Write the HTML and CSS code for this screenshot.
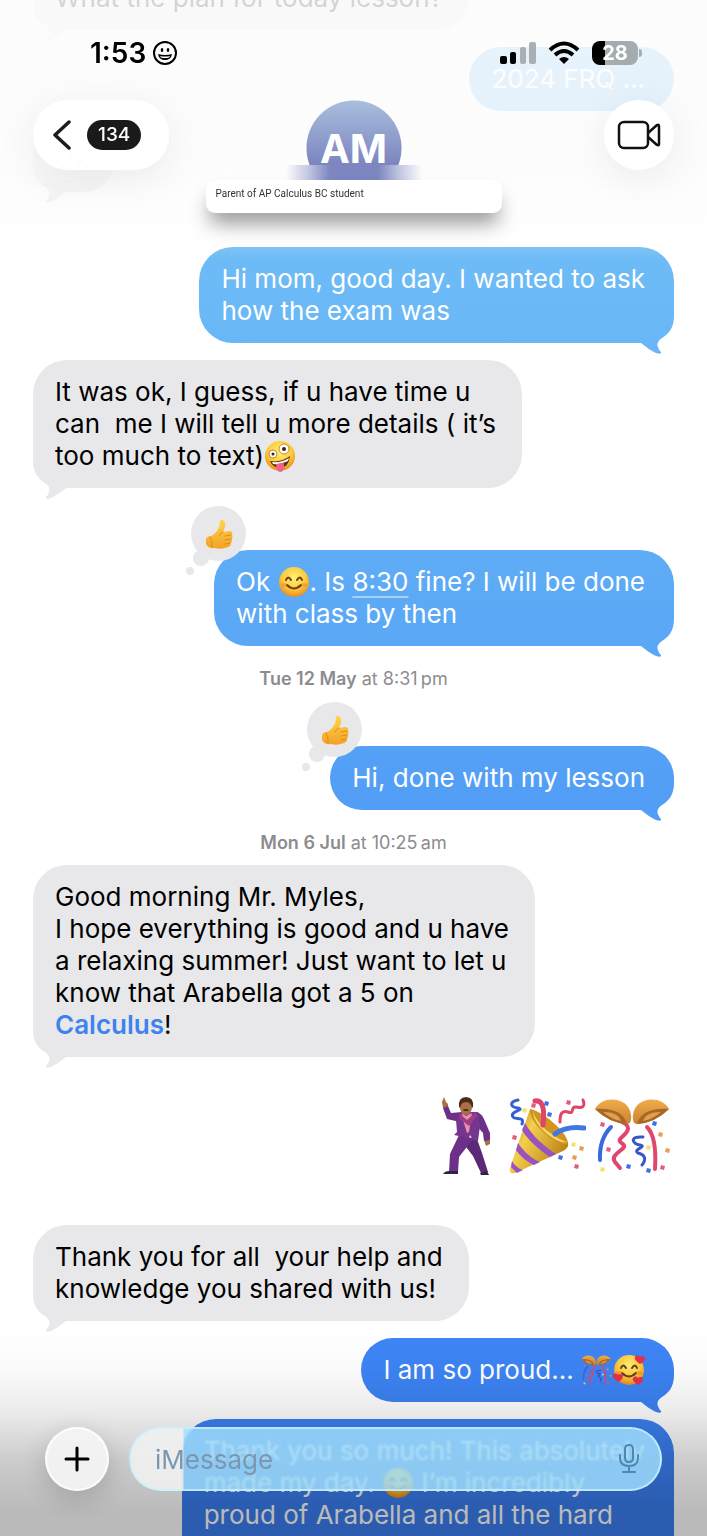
FILE: index.html
```html
<!DOCTYPE html>
<html lang="en">

<head>
    <meta charset="UTF-8">
    <meta name="viewport" content="width=device-width, initial-scale=1.0">
    <title>Messages</title>
    <link rel="stylesheet" href="styles.css">
</head>

<body>
    <!-- shared drawings -->
    <svg class="sprite" aria-hidden="true">
        <defs>
            <radialGradient id="face" cx="50%" cy="35%" r="65%">
                <stop offset="0" stop-color="#fff07a" />
                <stop offset="0.6" stop-color="#fccb3c" />
                <stop offset="1" stop-color="#ec8a1c" />
            </radialGradient>
            <linearGradient id="cone" x1="0" y1="0" x2="1" y2="0.6">
                <stop offset="0" stop-color="#b07a14" />
                <stop offset="0.4" stop-color="#f4cf4c" />
                <stop offset="1" stop-color="#b98116" />
            </linearGradient>
            <linearGradient id="shell" x1="0" y1="0" x2="0" y2="1">
                <stop offset="0" stop-color="#f0ac4a" />
                <stop offset="1" stop-color="#c98330" />
            </linearGradient>
            <linearGradient id="thumb" x1="0" y1="0" x2="0" y2="1">
                <stop offset="0" stop-color="#ffd54a" />
                <stop offset="1" stop-color="#f3a127" />
            </linearGradient>
        </defs>
        <symbol id="thumbs-up" viewBox="0 0 28 30">
            <path fill="url(#thumb)" d="M1 20Q2 17 6 17Q9 16 12 12Q15 8 15 3Q15 0 18 1Q21 3 20 8L18 13L24 12Q28 12 27 15Q28 18 27 20Q27 23 26 24Q26 27 23 28Q16 31 10 29Q3 30 1 25Z" />
            <path fill="none" stroke="#dd8c1c" stroke-width="1" stroke-linecap="round" d="M18 13q-3 1-4 4M20 17l6-1M20 21l6-1M20 25l5-1M5 18q3 5 2 10" />
        </symbol>
        <symbol id="popper-ball" viewBox="0 0 80 80">
            <path fill="none" stroke="#3a6ae0" stroke-width="4" stroke-linecap="round" d="M17 31Q5 43 6 64" />
            <path fill="none" stroke="#e0476f" stroke-width="4" stroke-linecap="round" d="M28 26c9 4 7 9 0 15-7 6 4 6 2 10-2 4-14 8-9 15l5 6M53 31q10 10 8 42" />
            <path fill="none" stroke="#3558c4" stroke-width="3" stroke-linecap="round" d="M49 41c-14-1-11 7-3 8 8 2-8 4-2 8 8 2 8 7 4 12" />
            <path fill="url(#shell)" d="M1 13C8-1 35 0 37 19Q38 28 33 28Q15 27 1 13z" />
            <path fill="#a8682a" d="M1 13Q28 11 33 28Q15 27 1 13z" />
            <path fill="#e0a04c" d="M9 16Q24 16 27 25Q17 23 9 16z" />
            <path fill="url(#shell)" d="M75 13C68-1 41 0 39 19Q38 28 43 28Q61 27 75 13z" />
            <path fill="#a8682a" d="M75 13Q48 11 43 28Q61 27 75 13z" />
            <path fill="#e0a04c" d="M67 16Q52 16 49 25Q59 23 67 16z" />
            <path fill="#e25c7b" d="M7 26l4 1-1 4-4-1zM13 51l4 1-1 4-4-1zM67 69l4 1-1 4-4-1z" />
            <path fill="#3d6fe6" d="M59 25l4 1-1 4-4-1zM33 68l4 1-1 4-4-1zM53 72l4 1-1 4-4-1z" />
            <path fill="#ec9d4f" d="M65 36l4 1-1 4-4-1zM72 52l4 1-1 4-4-1z" />
            <path fill="#f4e370" d="M53 49l4 1-1 4-4-1zM7 71l4 1-1 4-4-1z" />
        </symbol>
        <symbol id="smile" viewBox="0 0 32 32">
            <circle cx="16" cy="16" r="15" fill="url(#face)" />
            <path fill="none" stroke="#6b3f10" stroke-width="2" stroke-linecap="round" d="M8 14q2-5 5 0M19 14q3-5 5 0M9 19q7 7 14 0" />
            <ellipse cx="6" cy="19" rx="3" ry="2" fill="#f3713a" opacity=".4" />
            <ellipse cx="26" cy="19" rx="3" ry="2" fill="#f3713a" opacity=".4" />
        </symbol>
    </svg>

    <main class="thread">
        <p class="bubble received">What the plan for today lesson?</p>
        <p class="bubble sent file">2024 FRQ ...</p>
        <p class="bubble received">Ok</p>
        <p class="bubble sent after-file">Hi mom, good day. I wanted to ask<br>how the exam was</p>
        <p class="bubble received">It was ok, I guess, if u have time u<br>can&nbsp; me I will tell u more details ( it’s<br>too much to text)<svg class="emoji" viewBox="0 0 32 32" role="img" aria-label="Zany face">
                <circle cx="16" cy="16" r="15" fill="url(#face)" />
                <circle cx="9" cy="14" r="4" fill="#fff" stroke="#c98a20" />
                <circle cx="9" cy="14" r="1.5" fill="#3b2410" />
                <circle cx="20" cy="9" r="5" fill="#fff" stroke="#c98a20" />
                <circle cx="20" cy="9" r="2" fill="#3b2410" />
                <path fill="#5d2e0c" d="M6 21q11 2 20-5-1 11-10 12-7 0-10-7z" />
                <path fill="#fff" d="M8 22q10 1 17-4l-1 3q-7 4-15 3z" />
                <path fill="#f2608c" d="M12 24q5 0 8-2l0 6q-1 4-4 4-4-1-4-8z" />
            </svg></p>
        <div class="bubble sent reacted">
            <span class="reaction"><svg class="thumb" role="img" aria-label="Liked"><use href="#thumbs-up" /></svg></span>
            Ok <svg class="emoji" role="img" aria-label="Smiling face"><use href="#smile" /></svg>. Is <a class="time-link" href="#">8:30</a> fine? I will be done<br>with class by then
        </div>
        <p class="stamp"><b>Tue 12 May</b> at 8:31&#8239;pm</p>
        <div class="bubble sent reacted">
            <span class="reaction"><svg class="thumb" role="img" aria-label="Liked"><use href="#thumbs-up" /></svg></span>
            Hi, done with my lesson
        </div>
        <p class="stamp"><b>Mon 6 Jul</b> at 10:25&#8239;am</p>
        <p class="bubble received">Good morning Mr. Myles,<br>I hope everything is good and u have<br>a relaxing summer! Just want to let u<br>know that Arabella got a 5 on<br><a class="topic" href="#">Calculus</a>!</p>
        <div class="big-emoji">
            <svg viewBox="0 0 56 80" role="img" aria-label="Man dancing">
                <path fill="#a96f45" d="M0 6L2 1L4 6L6 8L6 12L1 12ZM42 44L48 43L48 48L44 50Z" />
                <path fill="#5c2878" d="M20 40L35 43L40 57L46 76L39 77L31 60L21 47Z" />
                <path fill="#6c3088" d="M1 12L6 10L9 17L20 16L18 26L5 23ZM35 16Q40 18 42 23L48 37L48 44L42 45L41 37L34 29ZM17 39L31 43L17 61L16 76L7 76L8 58Z" />
                <path fill="#74368f" d="M14 24L19 16L36 16L38 30L36 45L31 44L28 39L27 42L12 39L15 36Z" />
                <path fill="#ec8fae" d="M20 17L24 20L30 17L27 36L25 37L21 24Z" />
                <path fill="#a13d83" d="M17 17L25 24L34 16L35 20L27 30L18 23Z" />
                <ellipse cx="24" cy="11" rx="6" ry="8" fill="#a96f45" />
                <path fill="#4d2c18" d="M17 11Q16 1 24 1T31 11L30 12Q29 6 24 6T18 12ZM21 14q3-2 6 0l-1 1h-4z" />
                <path fill="#2b2541" d="M7 75h9v3H1q2-3 6-3zM38 77l7-2 2 4h-8z" />
            </svg>
            <svg viewBox="0 0 80 80" role="img" aria-label="Party popper">
                <path fill="none" stroke="#365fd4" stroke-width="3" stroke-linecap="round" d="M12 4c-9 2-8 7 0 8 8 2-9 3-5 9 2 3 12-1 9 7" />
                <path fill="url(#cone)" d="M24 13c10 3 32 24 38 34 1 4-2 6-5 8L9 77c-4 1-6-1-5-5z" />
                <path fill="#d2941f" d="M24 13c10 1 37 22 38 34-7 7-40-19-38-34z" />
                <path fill="#f5da68" d="M27 15c3 13 21 27 34 31-7 3-34-14-34-31z" />
                <path fill="#9a52c3" d="M19 27c7 13 20 24 31 31l-6 3C33 54 21 43 16 34zM12 47c6 9 14 16 22 19l-6 3c-7-3-14-9-18-15zM6 65c3 5 7 8 11 9l-6 3-6-6z" />
                <path fill="none" stroke="#df4569" stroke-width="5" stroke-linecap="round" d="M29 5q11-2 8 24" />
                <path fill="none" stroke="#df4569" stroke-width="3" stroke-linecap="round" d="M77 4c3 8-2 8-7 7-6-1-1 8-8 5-7-2-8 3-8 10" />
                <path fill="none" stroke="#3e78e0" stroke-width="5" stroke-linecap="round" d="M49 38q11-8 29-6" />
                <path fill="#e25c7b" d="M26 7l4 1-1 4-4-1zM61 4l4 1-1 4-4-1zM7 39l4 1-1 4-4-1zM69 68l4 1-1 4-4-1z" />
                <path fill="#3d6fe6" d="M39 5l4 1-1 4-4-1zM42 16l4 1-1 4-4-1zM53 59l4 1-1 4-4-1z" />
                <path fill="#f4e370" d="M17 12l4 1-1 4-4-1zM66 46l4 1-1 4-4-1z" />
                <path fill="#ec9d4f" d="M67 59l4 1-1 4-4-1zM74 50l4 1-1 4-4-1z" />
            </svg>
            <svg viewBox="0 0 80 80" role="img" aria-label="Confetti ball"><use href="#popper-ball" /></svg>
        </div>
        <p class="bubble received">Thank you for all&nbsp; your help and<br>knowledge you shared with us!</p>
        <p class="bubble sent">I am so proud... <svg class="emoji" role="img" aria-label="Confetti ball"><use href="#popper-ball" /></svg><svg class="emoji" viewBox="0 0 32 32" role="img" aria-label="Smiling face with hearts">
                <use href="#smile" />
                <path id="heart" fill="#e8304a" d="M27 10c-4-3-6-5-5-7 1-2 4-2 5 0 2-2 5-1 5 1 0 3-2 4-5 6z" />
                <use href="#heart" x="-22" y="18" />
                <use href="#heart" x="-2" y="21" />
            </svg></p>
        <p class="bubble sent latest">Thank you so much! This absolutely<br>made my day. <svg class="emoji" role="img" aria-label="Smiling face"><use href="#smile" /></svg> I’m incredibly<br>proud of Arabella and all the hard</p>
    </main>

    <header class="top">
        <div class="status">
            <div class="clock">
                <span>1:53</span>
                <svg width="24" height="24" viewBox="0 0 24 24" aria-hidden="true">
                    <circle cx="12" cy="12" r="11" fill="none" stroke="#000" stroke-width="2" />
                    <ellipse cx="9" cy="9" rx="1.3" ry="2" />
                    <ellipse cx="15" cy="9" rx="1.3" ry="2" />
                    <path d="M5 13q7 2 14 0-1 6-7 6t-7-6z" />
                    <path fill="#fff" d="M7 15q5 1 10 0l-1 1.500q-4 1-8 0z" />
                </svg>
            </div>
            <div class="signals">
                <svg width="36" height="24" viewBox="0 0 36 24" aria-hidden="true">
                    <rect x="0" y="15" width="7" height="8" rx="2" />
                    <rect x="10" y="11" width="6" height="12" rx="2" />
                    <rect x="20" y="6" width="6" height="17" rx="2" fill="#a9afb3" />
                    <rect x="29" y="1" width="7" height="22" rx="2" fill="#a9afb3" />
                </svg>
                <svg width="32" height="24" viewBox="0 0 32 24" aria-hidden="true">
                    <path fill="none" stroke="#000" stroke-width="4" d="M2 9q14-13 28 0M7 14q9-8 18 0" />
                    <path d="M11 18q5-4 10 0l-5 5z" />
                </svg>
                <div class="battery"><span>28</span></div>
            </div>
        </div>
        <nav class="nav">
            <button class="pill back" type="button" aria-label="Back">
                <svg width="18" height="30" viewBox="0 0 18 30" aria-hidden="true">
                    <path fill="none" stroke="#1c1c1c" stroke-width="3.500" stroke-linecap="round" stroke-linejoin="round" d="M16 2L2 15l14 13" />
                </svg>
                <span class="count">134</span>
            </button>
            <div class="contact">
                <div class="avatar">AM</div>
                <div class="name">Parent of AP Calculus BC student</div>
            </div>
            <button class="pill video" type="button" aria-label="Video call">
                <svg width="44" height="30" viewBox="0 0 44 30" aria-hidden="true">
                    <rect x="2" y="2" width="29" height="26" rx="5" fill="none" stroke="#111" stroke-width="2.500" />
                    <path fill="none" stroke="#111" stroke-width="2.500" stroke-linejoin="round" d="M31 13l9-8q2-1 2 1v18q0 2-2 1l-9-8" />
                </svg>
            </button>
        </nav>
    </header>

    <footer class="composer">
        <button class="glass add" type="button" aria-label="Add">
            <svg width="26" height="26" viewBox="0 0 26 26" aria-hidden="true">
                <path stroke="#000" stroke-width="3" stroke-linecap="round" d="M13 2v22M2 13h22" />
            </svg>
        </button>
        <div class="glass field">
            <input type="text" aria-label="Message" placeholder="iMessage">
            <button class="mic" type="button" aria-label="Dictate">
                <svg width="22" height="30" viewBox="0 0 22 30" aria-hidden="true">
                    <path fill="none" stroke="#4e86b4" stroke-width="2" stroke-linecap="round" d="M11 1q4 0 4 4v9q0 4-4 4t-4-4V5q0-4 4-4zM2 11v3q0 8 9 8t9-8v-3M11 22v6M5 28h12" />
                </svg>
            </button>
        </div>
    </footer>
</body>

</html>
```
FILE: styles.css
```css
* {
    box-sizing: border-box;
}

body {
    font-family: Inter, "Liberation Sans", sans-serif;
    margin: 0;
    height: 100vh;
    overflow: hidden;
    background-color: #fff;
    color: #000;
}

button {
    border: none;
    padding: 0;
    font: inherit;
    cursor: pointer;
}

.sprite {
    position: absolute;
    width: 0;
    height: 0;
}

/* conversation */
.thread {
    display: flex;
    flex-direction: column;
    align-items: flex-start;
    gap: 17px;
    height: 100vh;
    overflow: hidden;
    padding: 0 33px;
    font-size: 26px;
    line-height: 32px;
}

.bubble {
    position: relative;
    isolation: isolate;
    flex: none;
    margin: 0;
    padding: 16px 29px 16px 22px;
    border-radius: 34px;
    white-space: nowrap;
}

.bubble:first-child {
    margin-top: -34px;
}

/* tail */
.bubble::after {
    content: "";
    position: absolute;
    z-index: -1;
    bottom: -12px;
    width: 34px;
    height: 46px;
    background: inherit;
}

.received {
    padding: 16px 26px 16px 22px;
    background-color: #e8e8ea;
}

.received::after {
    left: 0;
    clip-path: path("M0 0 V7 C0 20 6 25 12 29 C17 32 17 36 16 38 C15 42 12 43 13 44 C14 47 25 41 33 34 L34 34 V0 Z");
}

.sent {
    align-self: flex-end;
    color: #fff;
    background: linear-gradient(#7cc6f5, #6bb9f6 300px, #5caaf6 600px, #539ff6 780px, #3d84f5 1370px, #3a7df0) fixed;
}

.sent::after {
    right: 0;
    clip-path: path("M34 0 V7 C34 20 28 25 22 29 C17 32 17 36 18 38 C19 42 22 43 21 44 C20 47 9 41 1 34 L0 34 V0 Z");
}

.file::after {
    display: none;
}

.after-file {
    margin-top: 38px;
}

.reacted {
    margin-top: 45px;
}

/* runs on below the bottom bar */
.latest {
    padding-bottom: 60px;
}

.emoji {
    width: 32px;
    height: 32px;
    margin-top: -4px;
    vertical-align: -7px;
}

.time-link {
    color: inherit;
    text-decoration: underline;
    text-decoration-thickness: 2px;
    text-decoration-color: #a8d2fb;
    text-underline-offset: 5px;
}

.topic {
    color: #3d83ef;
    font-weight: 600;
    text-decoration: none;
}

.reaction {
    position: absolute;
    left: -23px;
    top: -44px;
    width: 55px;
    height: 55px;
    display: flex;
    align-items: center;
    justify-content: center;
    border-radius: 50%;
    background-color: #e8e8ea;
}

.reaction::before,
.reaction::after {
    content: "";
    position: absolute;
    border-radius: 50%;
    background-color: #e8e8ea;
}

.reaction::before {
    left: 2px;
    bottom: -5px;
    width: 16px;
    height: 16px;
}

.reaction::after {
    left: -5px;
    bottom: -14px;
    width: 8px;
    height: 8px;
}

.thumb {
    width: 28px;
    height: 30px;
}

.stamp {
    align-self: center;
    margin: 6px 0 -5px;
    font-size: 18px;
    line-height: 20px;
    color: #8c8c90;
}

.stamp b {
    font-weight: 600;
}

.big-emoji {
    align-self: flex-end;
    display: flex;
    flex: none;
    gap: 8px;
    margin: 22px 0 32px;
}

.big-emoji svg {
    height: 80px;
}

/* top bar */
.top {
    position: fixed;
    top: 0;
    left: 0;
    right: 0;
    height: 260px;
    background: linear-gradient(rgba(252, 252, 252, .84) 170px, rgba(252, 252, 252, 0));
}

.status {
    display: flex;
    justify-content: space-between;
    align-items: center;
    padding: 37px 69px 0 90px;
}

.clock,
.signals {
    display: flex;
    align-items: center;
    height: 32px;
}

.clock {
    gap: 7px;
    font-size: 28px;
    font-weight: 600;
}

.signals {
    gap: 12px;
}

.battery {
    position: relative;
    width: 46px;
    height: 24px;
    border-radius: 8px;
    background: linear-gradient(90deg, #000 13px, #a5acb0 13px);
    color: #fff;
    font-size: 20px;
    font-weight: 700;
    line-height: 24px;
    text-align: center;
}

.battery::after {
    content: "";
    position: absolute;
    right: -4px;
    top: 8px;
    width: 3px;
    height: 8px;
    border-radius: 0 3px 3px 0;
    background-color: #a5acb0;
}

.nav {
    display: grid;
    grid-template-columns: 1fr auto 1fr;
    align-items: start;
    padding: 31px 33px 0;
}

.pill {
    display: flex;
    align-items: center;
    height: 70px;
    border-radius: 35px;
    background-color: rgba(255, 255, 255, .95);
    box-shadow: 0 8px 40px rgba(0, 0, 0, .08);
}

.back {
    justify-self: start;
    gap: 16px;
    padding: 0 28px 0 20px;
}

.count {
    padding: 0 11px;
    border-radius: 15px;
    background-color: #1a1a1a;
    color: #fff;
    font-size: 19px;
    font-weight: 500;
    line-height: 30px;
}

.video {
    justify-self: end;
    justify-content: center;
    width: 70px;
}

.contact {
    display: flex;
    flex-direction: column;
    align-items: center;
}

.avatar {
    position: relative;
    width: 96px;
    height: 80px;
    padding-top: 29px;
    background: radial-gradient(circle 48px at 48px 48px, transparent 47px, #fcfcfc 48px), linear-gradient(#a8bfde, #7b84be 66px);
    color: #fff;
    font-size: 40px;
    font-weight: 700;
    line-height: 40px;
    text-align: center;
}

/* blurred lower edge of the photo */
.avatar::after {
    content: "";
    position: absolute;
    top: 65px;
    left: -20px;
    right: -20px;
    height: 15px;
    background: linear-gradient(90deg, #fcfcfc, #c3c7e2 22px, #7d86c0 44px, #7d86c0 92px, #c3c7e2 114px, #fcfcfc);
}

.name {
    position: relative;
    width: 296px;
    height: 33px;
    padding: 0 10px;
    border-radius: 9px;
    background-color: #fff;
    box-shadow: 0 14px 20px -4px rgba(0, 0, 0, .42);
    color: #333;
    font-family: Roboto, "Liberation Sans", sans-serif;
    font-size: 10px;
    line-height: 27px;
}

/* bottom bar */
.composer {
    position: fixed;
    left: 0;
    right: 0;
    bottom: 0;
    display: flex;
    gap: 20px;
    padding: 96px 45px 45px;
    background: linear-gradient(rgba(0, 0, 0, 0), rgba(0, 0, 0, .02) 40px, rgba(0, 0, 0, .08) 80px, rgba(0, 0, 0, .2) 130px, rgba(0, 0, 0, .27) 180px);
}

.glass {
    height: 64px;
    border: 2px solid rgba(255, 255, 255, .8);
    border-radius: 32px;
    background-color: rgba(245, 245, 245, .9);
}

.add {
    display: flex;
    flex: none;
    align-items: center;
    justify-content: center;
    width: 64px;
    box-shadow: 0 8px 30px rgba(0, 0, 0, .18);
}

.field {
    display: flex;
    flex: 1;
    align-items: center;
    padding: 0 20px 0 24px;
    overflow: hidden;
    border-color: rgba(200, 240, 255, .8);
    background: linear-gradient(90deg, rgba(240, 240, 240, .9) 52px, rgba(164, 226, 255, .8) 53px);
    backdrop-filter: blur(1px);
}

.field input {
    flex: 1;
    min-width: 0;
    padding: 0;
    border: none;
    outline: none;
    background: none;
    font: inherit;
    font-size: 26px;
}

.field input::placeholder {
    color: #7c98b0;
}

.mic {
    display: flex;
    background: none;
}
```
